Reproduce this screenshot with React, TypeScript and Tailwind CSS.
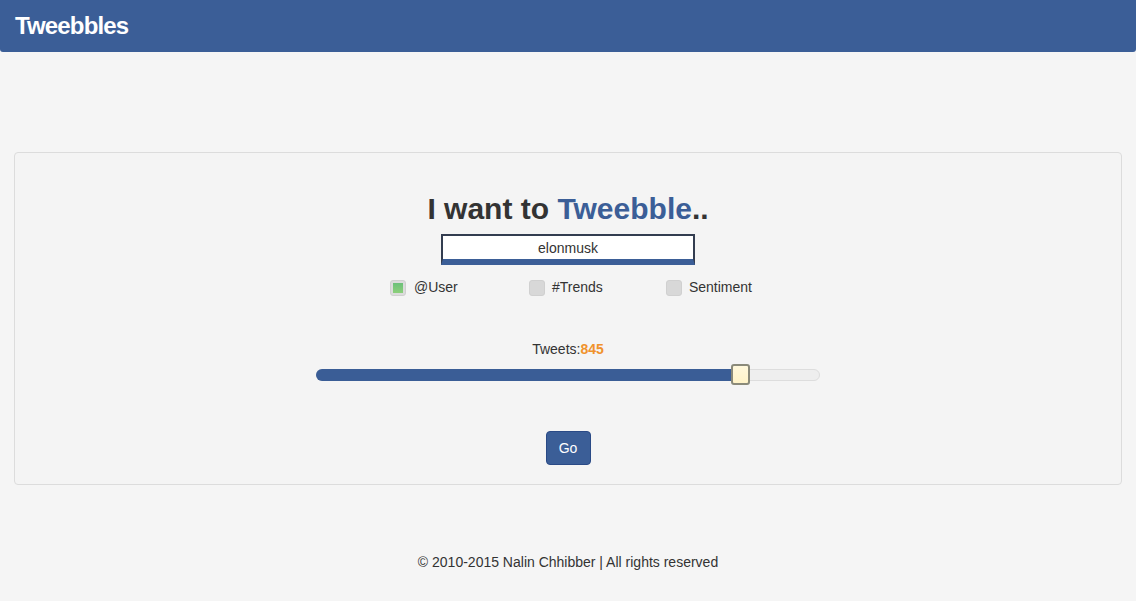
import React from "react";

export default function App() {
  return (
    <div className="min-h-[601px] bg-[#f5f5f5] text-[#333] font-['Liberation_Sans',Arial,sans-serif] text-[14px]">
      <header className="h-[52px] bg-[#3b5e97] rounded-b-[3px] flex items-center px-[15px]">
        <span className="text-white font-bold text-[24px] tracking-[-0.85px]">Tweebbles</span>
      </header>
      <div className="px-[14px] pt-[100px]">
        <div className="h-[333px] border border-[#dcdcdc] rounded-[4px] bg-[#f4f4f4] flex flex-col items-center pt-[38px]">
          <h1 className="font-bold text-[30px] leading-[36px]">
            I want to <span className="text-[#3b5e97]">Tweebble</span>..
          </h1>
          <div className="mt-[7px] w-[254px] h-[31px] bg-white border-t-2 border-l-2 border-r-2 border-[#333d50] border-b-[6px] border-b-[#3b5e97] flex items-center justify-center text-[14px] leading-none">
            <span className="mt-[1px]">elonmusk</span>
          </div>
          <div className="mt-[12px] ml-[6px] flex items-center">
            <label className="flex items-center w-[139px]">
              <span className="w-[16px] h-[16px] rounded-[3px] bg-[#dcdcdc] border border-[#d0d0d0] flex items-center justify-center">
                <span className="w-[10px] h-[10px] bg-gradient-to-b from-[#6cc07a] to-[#8ccf7a]"></span>
              </span>
              <span className="ml-[8px]">@User</span>
            </label>
            <label className="flex items-center w-[137px]">
              <span className="w-[16px] h-[16px] rounded-[3px] bg-[#d8d8d8] border border-[#d0d0d0]"></span>
              <span className="ml-[7px]">#Trends</span>
            </label>
            <label className="flex items-center w-[86px]">
              <span className="w-[16px] h-[16px] rounded-[3px] bg-[#d8d8d8] border border-[#d0d0d0]"></span>
              <span className="ml-[7px]">Sentiment</span>
            </label>
          </div>
          <div className="mt-[43px] leading-[16px]">
            Tweets:<span className="text-[#f0922c] font-bold">845</span>
          </div>
          <div className="mt-[12px] relative w-[504px] h-[12px]">
            <div className="absolute inset-0 rounded-[6px] bg-[#eeeeee] border border-[#dddddd]"></div>
            <div className="absolute left-0 top-0 h-[12px] w-[424px] rounded-l-[6px] bg-[#3a5d96]"></div>
            <div className="absolute left-[415px] top-[-5px] w-[19px] h-[21px] rounded-[3px] border-2 border-[#8a8a7a] bg-gradient-to-b from-[#fff8dc] to-[#fff3c8]"></div>
          </div>
          <button className="mt-[50px] w-[45px] h-[34px] rounded-[4px] bg-[#3b5e97] border border-[#2a4a86] text-white text-[14px]">
            Go
          </button>
        </div>
      </div>
      <footer className="mt-[69px] text-center leading-[16px]">
        © 2010-2015 Nalin Chhibber | All rights reserved
      </footer>
    </div>
  );
}
